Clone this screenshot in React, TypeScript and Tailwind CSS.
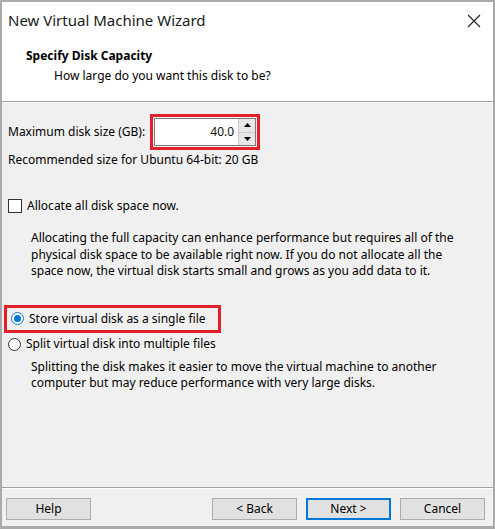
import React from "react";

function Button({ label, primary }: { label: string; primary?: boolean }) {
  return (
    <button
      className={`w-[85px] h-[22px] bg-[#e1e1e1] text-[12px] text-black leading-none ${
        primary ? "border-2 border-[#0078d7]" : "border border-[#adadad]"
      }`}
    >
      {label}
    </button>
  );
}

function Radio({ checked }: { checked?: boolean }) {
  return (
    <span
      className={`w-[13px] h-[13px] rounded-full border bg-white flex items-center justify-center shrink-0 ${
        checked ? "border-[#0078d7]" : "border-[#333333]"
      }`}
    >
      {checked && <span className="w-[7px] h-[7px] rounded-full bg-[#0078d7]" />}
    </span>
  );
}

export default function App() {
  return (
    <div className="w-[495px] h-[529px] border-l-2 border-t-2 border-r-2 border-b-[3px] border-[#aaaaaa] bg-[#f0f0f0] flex flex-col font-['Noto_Sans','Open_Sans',sans-serif] text-[12px] text-black overflow-hidden">
      {/* Header */}
      <div className="bg-white h-[100px] border-b border-[#a0a0a0] shrink-0">
        <div className="flex items-center justify-between h-[36px] pl-[6px] pr-[12px]">
          <span className="text-[15px] text-[#1a1a1a]">New Virtual Machine Wizard</span>
          <svg width="14" height="14" viewBox="0 0 14 14" className="mt-[1px]">
            <path d="M1 1L13 13M13 1L1 13" stroke="#222" strokeWidth="1.1" />
          </svg>
        </div>
        <div className="pl-[24px] pt-[9px]">
          <div className="font-bold text-[12px] leading-[18px]">Specify Disk Capacity</div>
          <div className="pl-[28px] leading-[18px] mt-[2px]">How large do you want this disk to be?</div>
        </div>
      </div>
      <div className="h-px bg-white shrink-0" />

      {/* Body */}
      <div className="flex-1 flex flex-col px-[6px]">
        <div className="flex items-center mt-[11px] h-[36px]">
          <span>Maximum disk size (GB):</span>
          <div className="ml-[5px] border-[3px] border-[#e3202a] flex h-[36px] w-[110px]">
            <div className="flex flex-1 border border-[#7a7a7a] m-px bg-white">
              <div className="flex-1 flex items-center justify-end pr-[4px] text-[#111]">40.0</div>
              <div className="w-[17px] flex flex-col border-l border-[#cccccc]">
                <div className="flex-1 bg-[#e8e8e8] border-b border-[#cccccc] flex items-center justify-center">
                  <svg width="7" height="4" viewBox="0 0 7 4"><path d="M0 4L3.5 0L7 4Z" fill="#000" /></svg>
                </div>
                <div className="flex-1 bg-[#e8e8e8] flex items-center justify-center">
                  <svg width="7" height="4" viewBox="0 0 7 4"><path d="M0 0L3.5 4L7 0Z" fill="#000" /></svg>
                </div>
              </div>
            </div>
          </div>
        </div>
        <div className="mt-[1px] leading-[18px]">Recommended size for Ubuntu 64-bit: 20 GB</div>

        <div className="flex items-center mt-[29px] h-[16px]">
          <span className="w-[14px] h-[14px] border border-[#333333] bg-white shrink-0" />
          <span className="ml-[5px]">Allocate all disk space now.</span>
        </div>
        <p className="pl-[23px] mt-[16px] leading-[16.5px] pr-[20px]">
          Allocating the full capacity can enhance performance but requires all of the
          physical disk space to be available right now. If you do not allocate all the
          space now, the virtual disk starts small and grows as you add data to it.
        </p>

        <div className="mt-[25px] -ml-[4px] w-[217px] h-[28px] border-[3px] border-[#e3202a] flex items-center pl-[4px]">
          <Radio checked />
          <span className="ml-[5px]">Store virtual disk as a single file</span>
        </div>
        <div className="flex items-center mt-[3px] h-[17px]">
          <Radio />
          <span className="ml-[5px]">Split virtual disk into multiple files</span>
        </div>
        <p className="pl-[23px] mt-[6px] leading-[16.5px] pr-[20px]">
          Splitting the disk makes it easier to move the virtual machine to another
          computer but may reduce performance with very large disks.
        </p>
      </div>

      {/* Footer */}
      <div className="h-px bg-[#a0a0a0] shrink-0" />
      <div className="h-px bg-white shrink-0" />
      <div className="h-[37px] shrink-0 flex items-start pt-[9px] pl-[4px] pr-[8px]">
        <Button label="Help" />
        <div className="flex-1" />
        <div className="flex gap-[9px]">
          <Button label="< Back" />
          <Button label="Next >" primary />
          <Button label="Cancel" />
        </div>
      </div>
    </div>
  );
}
